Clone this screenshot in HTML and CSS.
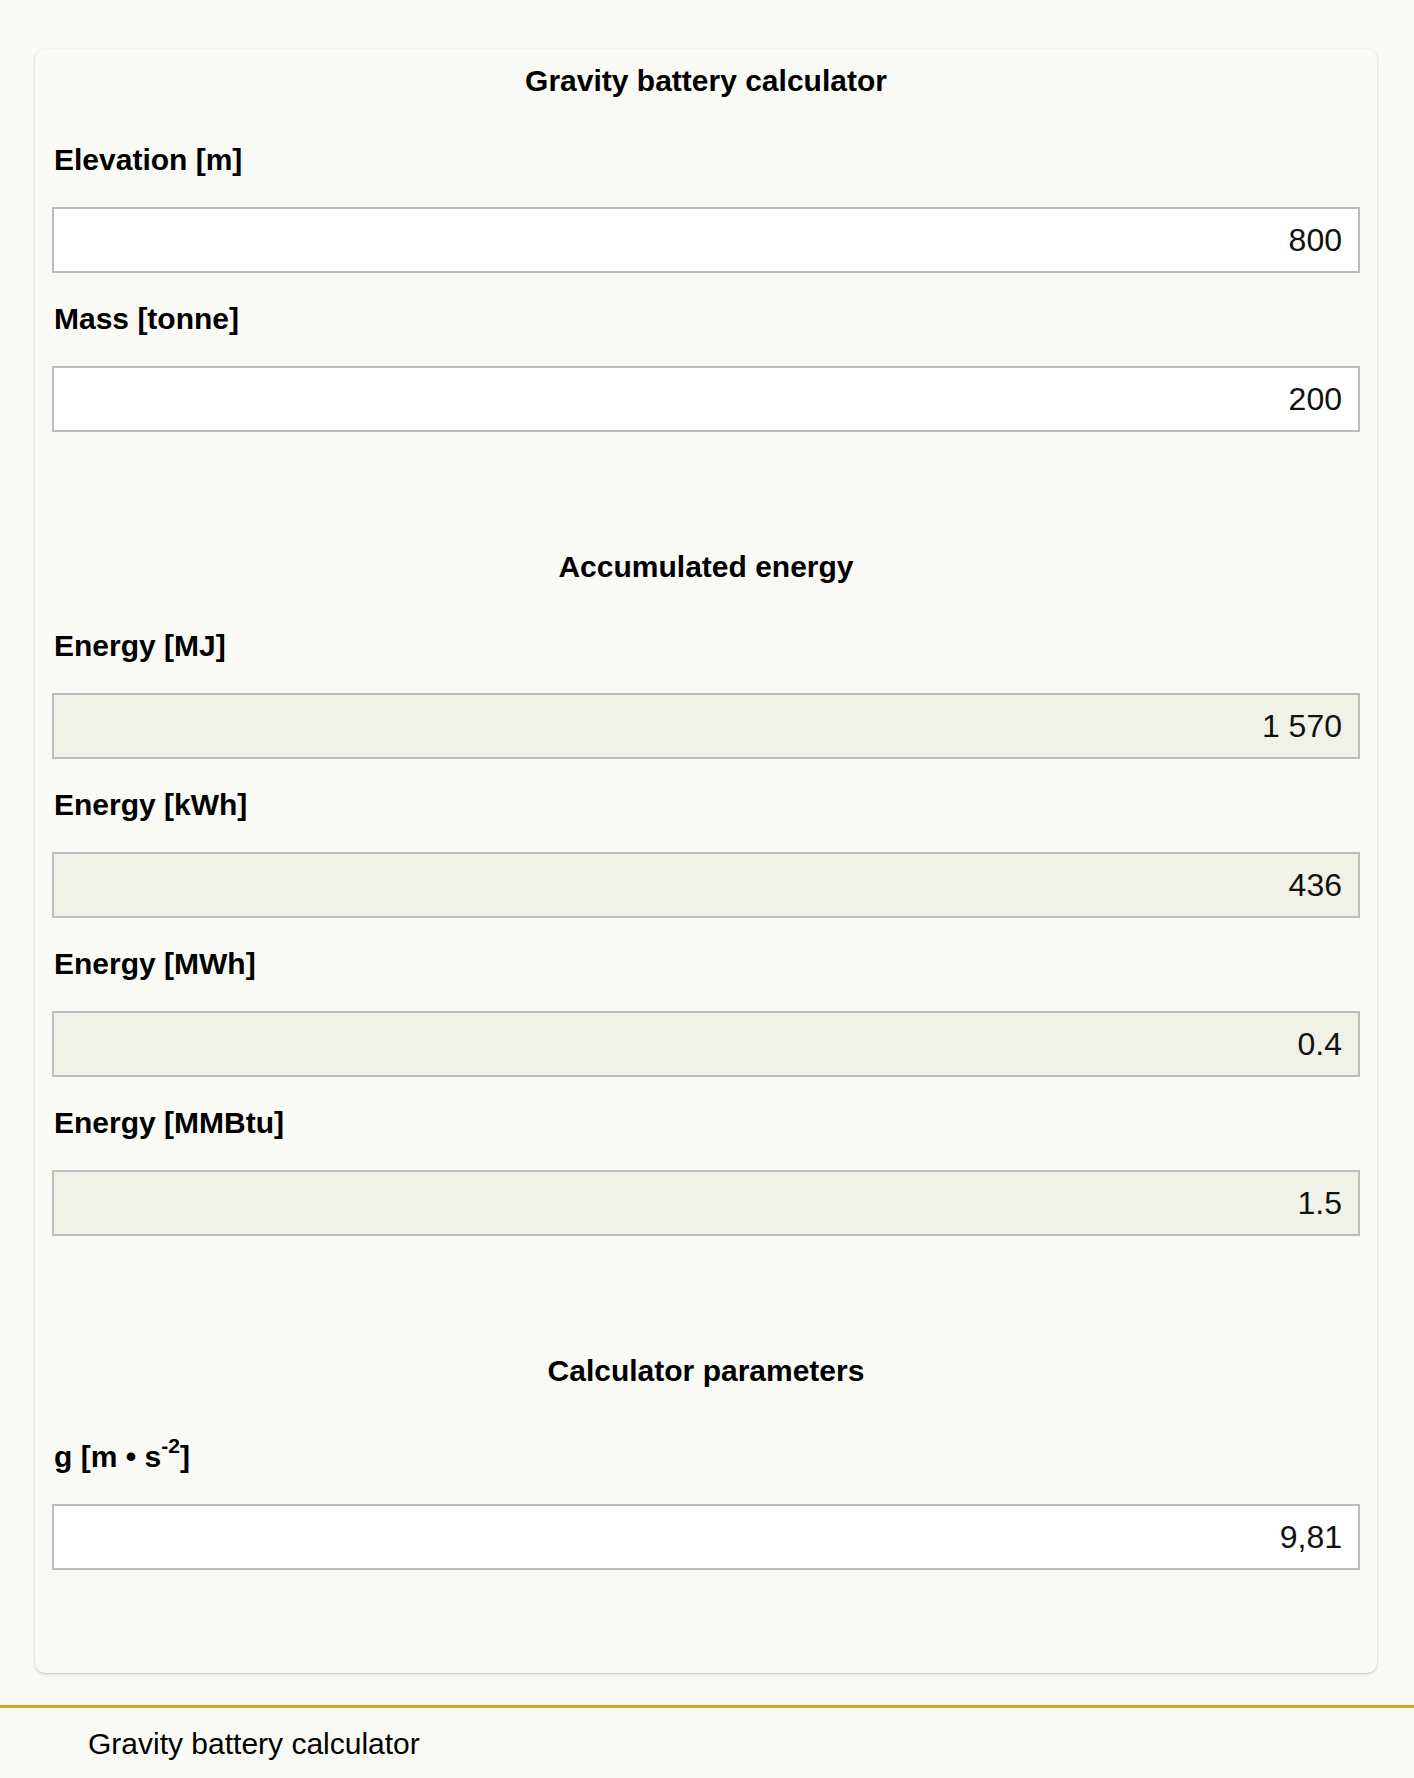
FILE: index.html
```html
<!DOCTYPE html>
<html lang="en">
<head>
<meta charset="utf-8">
<title>Gravity battery calculator</title>
<link rel="stylesheet" href="styles.css">
</head>
<body>
<main class="card">
  <section class="section">
    <h2 class="section-title">Gravity battery calculator</h2>
    <div class="field">
      <label class="field-label" for="elev">Elevation [m]</label>
      <input class="field-input" id="elev" type="text" value="800">
    </div>
    <div class="field">
      <label class="field-label" for="mass">Mass [tonne]</label>
      <input class="field-input" id="mass" type="text" value="200">
    </div>
  </section>
  <section class="section">
    <h2 class="section-title">Accumulated energy</h2>
    <div class="field">
      <label class="field-label" for="mj">Energy [MJ]</label>
      <input class="field-input readonly" id="mj" type="text" value="1 570" readonly>
    </div>
    <div class="field">
      <label class="field-label" for="kwh">Energy [kWh]</label>
      <input class="field-input readonly" id="kwh" type="text" value="436" readonly>
    </div>
    <div class="field">
      <label class="field-label" for="mwh">Energy [MWh]</label>
      <input class="field-input readonly" id="mwh" type="text" value="0.4" readonly>
    </div>
    <div class="field">
      <label class="field-label" for="mmbtu">Energy [MMBtu]</label>
      <input class="field-input readonly" id="mmbtu" type="text" value="1.5" readonly>
    </div>
  </section>
  <section class="section">
    <h2 class="section-title">Calculator parameters</h2>
    <div class="field">
      <label class="field-label" for="g">g [m • s<sup class="sup">-2</sup>]</label>
      <input class="field-input" id="g" type="text" value="9,81">
    </div>
  </section>
</main>
<footer class="footer">
  <div class="footer-text">Gravity battery calculator</div>
</footer>
</body>
</html>
```

FILE: styles.css
```css
html, body {
  margin: 0;
  padding: 0;
  background: #f9f9f5;
  font-family: "Liberation Sans", Arial, sans-serif;
  color: #000;
}

body {
  padding-top: 49px;
}

.card {
  margin: 0 37px 0 35px;
  padding: 15px 17px 74px 17px;
  background: #f9f9f5;
  border-radius: 10px;
  box-shadow: 0 1px 3px rgba(0, 0, 0, 0.22);
}

.section + .section {
  margin-top: 118px;
}

.section-title {
  margin: 0 0 45px 0;
  font-size: 30px;
  line-height: 34px;
  font-weight: bold;
  text-align: center;
}

.field {
  margin-bottom: 29px;
}

.field-label {
  display: block;
  padding-left: 2px;
  font-size: 30px;
  line-height: 34px;
  font-weight: bold;
  margin-bottom: 30px;
}

.sup {
  font-size: 21px;
  line-height: 25px;
  vertical-align: 14px;
}

.field-input {
  display: block;
  box-sizing: border-box;
  width: 100%;
  height: 66px;
  margin: 0;
  padding: 0 16px 0 16px;
  border: 2px solid #bcbcbc;
  border-radius: 0;
  background: #ffffff;
  font-family: "Liberation Sans", Arial, sans-serif;
  font-size: 32px;
  color: #111;
  text-align: right;
  outline: none;
}

.field-input.readonly {
  background: #f1f2e7;
}

.footer {
  margin-top: 32px;
  border-top: 3px solid #daa520;
  padding: 19px 0 0 88px;
}

.footer-text {
  font-size: 30px;
  line-height: 34px;
}
```
